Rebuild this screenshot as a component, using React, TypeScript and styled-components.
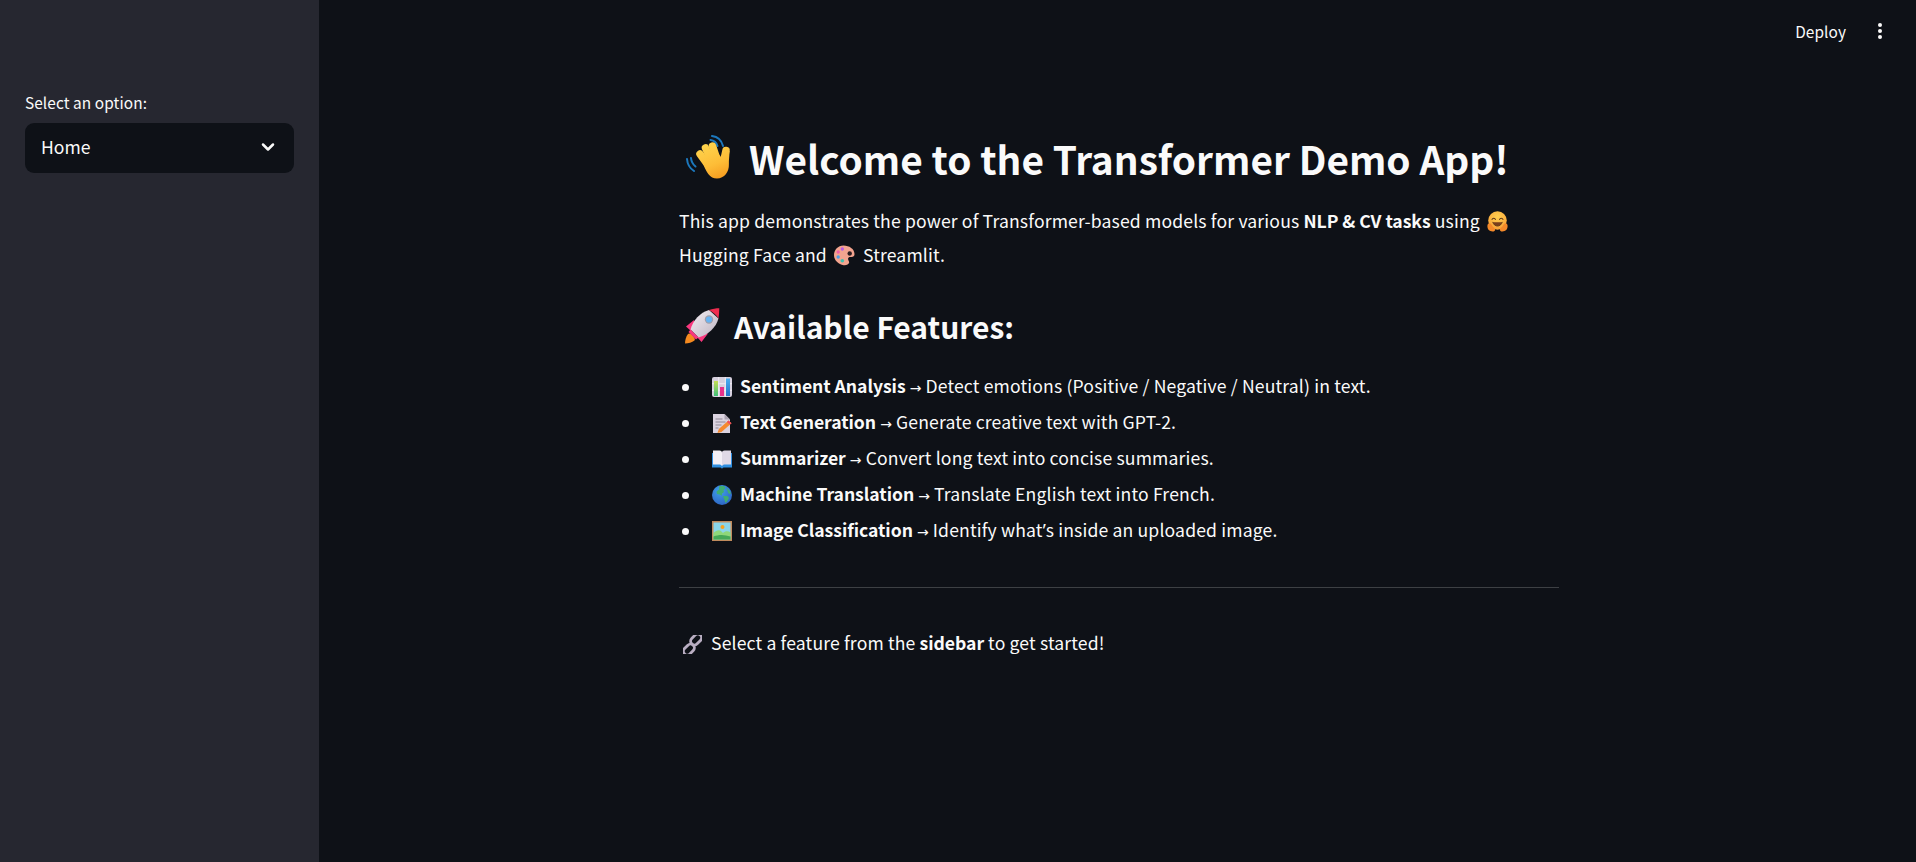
import React from "react";
import styled, { createGlobalStyle } from "styled-components";
import { ChevronDown } from "lucide-react";

const Global = createGlobalStyle`
  html, body { margin: 0; padding: 0; height: 100%; background: #0e1117; }
  #root { height: 100%; }
  * { box-sizing: border-box; }
`;

const FONT = `"Noto Sans CJK SC", "Noto Sans", sans-serif`;

const Page = styled.div`
  display: flex;
  height: 862px;
  overflow: hidden;
  background: #0e1117;
  color: #fafafa;
  font-family: ${FONT};
`;
const Sidebar = styled.aside`
  width: 319px;
  flex: none;
  background: #262730;
  padding: 91px 25px 0;
`;
const FieldLabel = styled.label`
  display: block;
  font-size: 15.4px;
  line-height: 22px;
  letter-spacing: 0.08px;
  margin-bottom: 10px;
`;
const Select = styled.div`
  height: 50px;
  border-radius: 9px;
  background: #0e1117;
  display: flex;
  align-items: center;
  justify-content: space-between;
  padding: 0 16px 2px;
  font-size: 17.6px;
  line-height: 28px;
`;
const Main = styled.main`
  flex: 1;
  min-width: 0;
  display: flex;
  flex-direction: column;
`;
const TopBar = styled.header`
  height: 62px;
  flex: none;
  display: flex;
  align-items: center;
  justify-content: flex-end;
  gap: 25px;
  padding-right: 27px;
  font-size: 15.4px;
  letter-spacing: 0.08px;
`;
const KebabIcon = styled.svg`
  width: 18px;
  height: 18px;
  display: block;
`;
const Content = styled.section`
  width: 880px;
  margin-left: 360px;
  font-size: 17.6px;
  line-height: 28px;
  letter-spacing: 0.15px;
`;
const Title = styled.h1`
  margin: 65px 0 0;
  padding-left: 7px;
  font-size: 38.8px;
  line-height: 62px;
  font-weight: 700;
  letter-spacing: 0;
  display: flex;
  align-items: center;
  gap: 17px;
`;
const Subtitle = styled.h2`
  margin: 31px 0 0;
  padding-left: 5px;
  font-size: 30px;
  line-height: 46px;
  font-weight: 700;
  letter-spacing: 0;
  display: flex;
  align-items: center;
  gap: 14px;
`;
const Para = styled.p<{ $top: number }>`
  margin: ${(p) => p.$top}px 0 0;
  line-height: 34px;
`;
const Strong = styled.strong`
  font-weight: 700;
  letter-spacing: -0.05px;
`;
const Arrow = styled.span`
  font-family: "DejaVu Sans", sans-serif;
  font-size: 14px;
  letter-spacing: 0;
`;
const Apostrophe = styled.span`
  font-family: "Noto Sans", sans-serif;
  letter-spacing: 0;
`;
const FeatureList = styled.ul`
  margin: 19px 0 0;
  padding: 0;
  list-style: none;
`;
const FeatureItem = styled.li`
  height: 36px;
  line-height: 36px;
  &::before {
    content: "";
    display: inline-block;
    width: 7px;
    height: 7px;
    border-radius: 50%;
    background: #fafafa;
    margin: 0 23.500px 0 2.500px;
    vertical-align: 2px;
  }
`;
const Rule = styled.hr`
  margin: 39px 0 0;
  border: 0;
  height: 1px;
  background: #3d4044;
`;
const Emoji = styled.svg<{ $size?: number; $gap?: number; $lead?: number }>`
  width: ${(p) => p.$size ?? 21}px;
  height: ${(p) => p.$size ?? 21}px;
  flex: none;
  display: inline-block;
  vertical-align: -4px;
  margin-right: ${(p) => p.$gap ?? 7}px;
  margin-left: ${(p) => p.$lead ?? 0}px;
`;

type EP = { $size?: number; $gap?: number; $lead?: number };

const Wave = (p: EP) => (
  <Emoji viewBox="0 0 46 46" {...p}>
    <defs>
      <linearGradient id="waveG" gradientUnits="userSpaceOnUse" x1="20" y1="6" x2="36" y2="44">
        <stop offset="0" stopColor="#ffd64f" />
        <stop offset=".6" stopColor="#fdbd37" />
        <stop offset="1" stopColor="#f59a1e" />
      </linearGradient>
    </defs>
    <g fill="none" stroke="#1c78bd" strokeWidth="2" strokeLinecap="round">
      <path d="M26 1c5 .6 9.500 4 11 10" />
      <path d="M24.500 5c3.500.5 6 2.700 7 6" />
      <path d="M1 24c.4 5 3 9.500 7 12" />
      <path d="M5 23c.3 3.500 1.800 6.300 4.500 8.500" />
    </g>
    <g fill="none" stroke="url(#waveG)" strokeWidth="7.500" strokeLinecap="round">
      <path d="M14 19l8 11" />
      <path d="M19.500 13l7 15" />
      <path d="M26.500 11l5 15" />
      <path d="M40 15.500c-.6 4-1.600 7.500-3.500 12" />
    </g>
    <path d="M15.500 24 32 18l3.500 5 1.500-8 6.500 1c0 5-.8 9-.6 13 .3 8-4.500 14.500-12 14.500C24 43.500 20 38 15.500 24z" fill="url(#waveG)" />
  </Emoji>
);
const Hug = (p: EP) => (
  <Emoji viewBox="0 0 22 22" {...p}>
    <defs>
      <radialGradient id="hugG" cx=".5" cy=".3" r=".8">
        <stop offset="0" stopColor="#ffcf4f" />
        <stop offset="1" stopColor="#f79a35" />
      </radialGradient>
    </defs>
    <circle cx="11" cy="10" r="9.700" fill="url(#hugG)" />
    <path d="M5.300 8.800c.6-1.700 2.900-1.700 3.500 0M13.200 8.800c.6-1.700 2.900-1.700 3.500 0" fill="none" stroke="#5a3416" strokeWidth="1.100" strokeLinecap="round" />
    <path d="M6 11.800c1 2.700 3 4 5 4s4-1.300 5-4" fill="#7a3f1c" stroke="#5a3416" strokeWidth=".8" strokeLinecap="round" />
    <path d="M.6 14.500c-.8 3.500 1.200 7 5.300 7 1.800 0 2.900-1 2.500-2.400-.3-1.200-1.600-1.800-2.500-2.900C5 15 4.400 13.200 3 12.800c-1-.3-2.100.7-2.400 1.700zM21.400 14.500c.8 3.500-1.200 7-5.300 7-1.800 0-2.900-1-2.500-2.400.3-1.200 1.600-1.800 2.500-2.900.9-1.100 1.500-2.900 2.900-3.300 1-.3 2.100.7 2.400 1.700z" fill="#f58a2a" />
  </Emoji>
);
const Palette = (p: EP) => (
  <Emoji viewBox="0 0 21 21" {...p}>
    <path d="M9.500.5c5.800 0 11 3.500 11 8.500 0 2.400-1.500 3.200-3.500 3-1.800-.2-3 .4-2.900 2 .1 1.500 1.300 2.300 1 3.800-.5 2-3 2.700-5.500 2.400C4.500 19.300 0 15.500 0 10.300 0 4.800 4 .5 9.500.5z" fill="#f3a48f" />
    <circle cx="15.700" cy="8.500" r="2.200" fill="#2a1c20" />
    <circle cx="8.300" cy="4" r="1.700" fill="#b65be0" />
    <circle cx="4.200" cy="7" r="1.700" fill="#ef5fa7" />
    <circle cx="4.200" cy="12" r="1.700" fill="#4a9ee8" />
    <circle cx="8.300" cy="15.700" r="1.800" fill="#3fc1b0" />
  </Emoji>
);
const Rocket = (p: EP) => (
  <Emoji viewBox="0 0 36 36" {...p}>
    <defs>
      <linearGradient id="rocketG" x1="0" y1="0" x2="1" y2="1">
        <stop offset="0" stopColor="#f4eff4" />
        <stop offset="1" stopColor="#bcb3c0" />
      </linearGradient>
    </defs>
    <path d="M4 26c-2 2.500-3 6-3 9.500 3.500 0 7-1 9.500-3 1-1.500-.2-3-1.500-4.500S5.500 24.500 4 26z" fill="#f58a1f" />
    <path d="M10 12 2 18.500 7 23l5-6zM24 25.500 17.500 34 13 29l6-4.500z" fill="#f8387e" />
    <path d="M25 2C16 4.500 9 12.500 6.500 21.500l8 8C24 27 32 19.500 34.500 10.500z" fill="url(#rocketG)" />
    <path d="M6.500 21.500 4.500 24l7.500 7.500 2.500-2z" fill="#f8387e" />
    <path d="M25 2c3.500-1.200 7-1.800 10.300-1.800 0 3.300-.3 6.800-.8 10.300C32.500 7 29 4 25 2z" fill="#ee2d4f" />
    <circle cx="25" cy="11.500" r="4.200" fill="#a19ea9" />
    <circle cx="25" cy="11.500" r="3.100" fill="#68b4f2" />
  </Emoji>
);
const Chart = (p: EP) => (
  <Emoji viewBox="0 0 20 20" {...p}>
    <defs>
      <linearGradient id="barG" x1="0" y1="0" x2="0" y2="1">
        <stop offset="0" stopColor="#c5dc55" />
        <stop offset="1" stopColor="#3fc078" />
      </linearGradient>
      <linearGradient id="barB" x1="0" y1="0" x2="0" y2="1">
        <stop offset="0" stopColor="#4cb0f2" />
        <stop offset="1" stopColor="#2472c8" />
      </linearGradient>
    </defs>
    <rect width="20" height="20" rx="2" fill="#d6d0de" />
    <path d="M6.700 0v20M13.300 0v20M0 6.700h20M0 13.300h20" stroke="#f2eff5" strokeWidth=".9" />
    <rect x="2" y="4" width="4" height="15" fill="url(#barG)" />
    <rect x="8" y="10" width="4" height="9" fill="#e8308a" />
    <rect x="14" y="1.500" width="4" height="17.500" fill="url(#barB)" />
  </Emoji>
);
const Memo = (p: EP) => (
  <Emoji viewBox="0 0 20 20" {...p}>
    <path d="M1 1h11.500L18 6.500V20H1z" fill="#dbd3e0" />
    <path d="M12.500 1 18 6.500h-5.500z" fill="#aca4b2" />
    <path d="M3.500 6h7M3.500 9h10M3.500 12h6M3.500 15h3" stroke="#8f8896" strokeWidth="1" />
    <path d="M16.500 7.500 19.500 10.200 9.500 19 5.500 20l1.300-4z" fill="#f58a2f" />
    <path d="M16.500 7.500 19.500 10.200l-1.600 1.400-3-2.700z" fill="#ef4a64" />
  </Emoji>
);
const Book = (p: EP) => (
  <Emoji viewBox="0 0 20 20" {...p}>
    <path d="M0 4h20v14.500h-7.500c-1.200 0-2 .4-2.500 1.200-.5-.8-1.300-1.200-2.500-1.200H0z" fill="#2f8fe0" />
    <path d="M1 1.500h6.500c1.300 0 2.500.7 2.500 2V17c-.5-.9-1.500-1.500-2.800-1.500H1z" fill="#f4f0f6" />
    <path d="M19 1.500h-6.500c-1.300 0-2.500.7-2.500 2V17c.5-.9 1.500-1.500 2.800-1.500H19z" fill="#e0d9e6" />
  </Emoji>
);
const Globe = (p: EP) => (
  <Emoji viewBox="0 0 20 20" {...p}>
    <defs>
      <radialGradient id="globeG" cx=".4" cy=".3" r=".85">
        <stop offset="0" stopColor="#3f9fe8" />
        <stop offset="1" stopColor="#2a5cc0" />
      </radialGradient>
    </defs>
    <circle cx="10" cy="10" r="10" fill="url(#globeG)" />
    <path d="M7 1.500c1.500-.5 4-.7 5.500 0l1 1.700-2 1.800L12 7l-2 1.500-.2 2.300-2-1.300L5 9l-.5-2.500L7 4.500z" fill="#3fae72" />
    <path d="M11 11h4.500l1.500 2-2 3.500-1.500 1.500L12.500 15z" fill="#3fae72" />
    <path d="M14.500 2.500 18 6l1 3-2.500-.5-1-2.500z" fill="#3fae72" />
  </Emoji>
);
const Picture = (p: EP) => (
  <Emoji viewBox="0 0 20 20" {...p}>
    <rect width="20" height="20" fill="#c08a5c" />
    <rect x="1.500" y="1.500" width="17" height="17" fill="#8ad6ea" />
    <circle cx="10.500" cy="6" r="2" fill="#f7a21f" />
    <path d="M1.500 12c3-3 6-3.500 8-1.500l1.500 1.500c2-2 5-2.500 7.500-.5v7h-17z" fill="#8fd77a" />
    <path d="M1.500 15.500c5-2 11-2 17 0v3h-17z" fill="#46a857" />
  </Emoji>
);
const Chain = (p: EP) => (
  <Emoji viewBox="0 0 20 20" {...p}>
    <g fill="none" stroke="#b9aec2" strokeWidth="3">
      <rect x="9.800" y="-1.800" width="8" height="13" rx="4" transform="rotate(45 13.800 4.700)" />
      <rect x="2.200" y="8.800" width="8" height="13" rx="4" transform="rotate(45 6.200 15.300)" />
    </g>
  </Emoji>
);

const features: { Icon: (p: EP) => React.ReactElement; name: string; desc: React.ReactNode }[] = [
  { Icon: Chart, name: "Sentiment Analysis", desc: "Detect emotions (Positive / Negative / Neutral) in text." },
  { Icon: Memo, name: "Text Generation", desc: "Generate creative text with GPT-2." },
  { Icon: Book, name: "Summarizer", desc: "Convert long text into concise summaries." },
  { Icon: Globe, name: "Machine Translation", desc: "Translate English text into French." },
  {
    Icon: Picture,
    name: "Image Classification",
    desc: (
      <>
        Identify what<Apostrophe>’</Apostrophe>s inside an uploaded image.
      </>
    ),
  },
];

export default function App() {
  return (
    <Page>
      <Global />
      <Sidebar>
        <FieldLabel>Select an option:</FieldLabel>
        <Select>
          <span>Home</span>
          <ChevronDown size={20} strokeWidth={3} color="#fafafa" />
        </Select>
      </Sidebar>
      <Main>
        <TopBar>
          <span>Deploy</span>
          <KebabIcon viewBox="0 0 18 18" fill="#fafafa">
            <circle cx="9" cy="3" r="2" />
            <circle cx="9" cy="9" r="2" />
            <circle cx="9" cy="15" r="2" />
          </KebabIcon>
        </TopBar>
        <Content>
          <Title>
            <Wave $size={46} $gap={0} />
            Welcome to the Transformer Demo App!
          </Title>
          <Para $top={15}>
            This app demonstrates the power of Transformer-based models for various <Strong>NLP &amp; CV tasks</Strong> using <Hug $size={21} $gap={0} $lead={3} />
            <br />
            Hugging Face and <Palette $size={21} $gap={8} $lead={3} />Streamlit.
          </Para>
          <Subtitle>
            <Rocket $size={36} $gap={0} />
            Available Features:
          </Subtitle>
          <FeatureList>
            {features.map(({ Icon, name, desc }) => (
              <FeatureItem key={name}>
                <Icon $size={20} $gap={8} />
                <Strong>{name}</Strong> <Arrow>→</Arrow> {desc}
              </FeatureItem>
            ))}
          </FeatureList>
          <Rule />
          <Para $top={38}>
            <Chain $size={19} $gap={9} $lead={4} />
            Select a feature from the <Strong>sidebar</Strong> to get started!
          </Para>
        </Content>
      </Main>
    </Page>
  );
}
